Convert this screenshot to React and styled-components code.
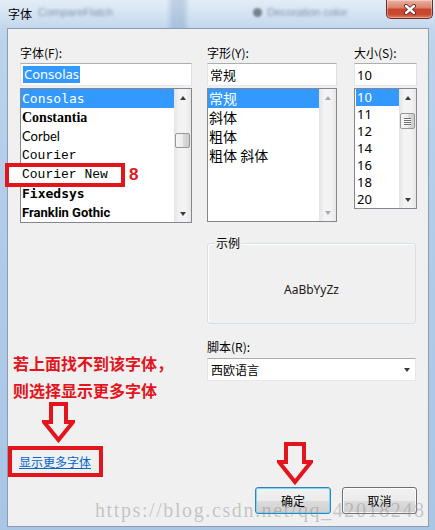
import React from 'react';
import styled, { createGlobalStyle } from 'styled-components';

const RED = '#e3141c';
const CJK = `"Noto Sans CJK SC", "Noto Sans", sans-serif`;

const GlobalStyle = createGlobalStyle`
  html, body {
    margin: 0;
    padding: 0;
    background: #fff;
  }
  body {
    font-family: ${CJK};
    font-size: 12px;
    color: #000;
  }
  * {
    box-sizing: border-box;
  }
`;

const Window = styled.div`
  position: relative;
  width: 435px;
  height: 530px;
  display: flex;
  flex-direction: column;
  overflow: hidden;
  background: linear-gradient(180deg, #cfe0f2 0%, #bcd3eb 8%, #b0cbe8 50%, #a9c6e5 100%);
`;

const TitleBar = styled.div`
  flex: none;
  height: 28px;
  display: flex;
  align-items: flex-start;
  padding: 0 2px 0 8px;
  background:
    linear-gradient(90deg, transparent 166px, rgba(70, 110, 160, 0.22) 173px, rgba(70, 110, 160, 0.22) 183px, transparent 190px),
    linear-gradient(180deg, rgba(255, 255, 255, 0.4), rgba(255, 255, 255, 0));
`;

const Title = styled.span`
  line-height: 28px;
  font-size: 12px;
  color: #000;
`;

const Blurred = styled.span`
  margin-left: ${(p) => p.$gap}px;
  line-height: 24px;
  font-family: "Liberation Sans", sans-serif;
  font-size: 11px;
  color: rgba(50, 70, 95, 0.5);
  filter: blur(1.4px);
  white-space: nowrap;
`;

const BlurDot = styled.span`
  margin: 8px 0 0 ${(p) => p.$gap}px;
  width: 9px;
  height: 9px;
  border-radius: 50%;
  background: rgba(40, 50, 60, 0.55);
  filter: blur(1px);
`;

const CloseButton = styled.div`
  margin-left: auto;
  width: 47px;
  height: 19px;
  display: flex;
  align-items: center;
  justify-content: center;
  border: 1px solid #6e2b22;
  border-top: none;
  border-radius: 0 0 5px 5px;
  background: linear-gradient(180deg, #eab3a3 0%, #dc7f68 45%, #c8452d 50%, #c94a31 80%, #e07b5c 100%);
  box-shadow: inset 0 0 0 1px rgba(255, 255, 255, 0.35);
`;

const Client = styled.div`
  margin: 0 6px 0 7px;
  height: 499px;
  border: 1px solid #8a9db5;
  background: #f0f0f0;
  display: flex;
  flex-direction: column;
`;

const TopRow = styled.div`
  display: flex;
  align-items: flex-start;
  padding: 16px 0 0 12px;
`;

const Column = styled.div`
  width: ${(p) => p.$width}px;
  margin-right: ${(p) => p.$gap || 0}px;
  display: flex;
  flex-direction: column;
`;

const Label = styled.div`
  height: 16px;
  line-height: 16px;
  font-size: 12px;
  margin-bottom: 2px;
  white-space: nowrap;
`;

const TextBox = styled.div`
  height: 23px;
  display: flex;
  align-items: center;
  padding-left: 2px;
  border: 1px solid;
  border-color: #abadb3 #dbdfe6 #e3e9ef #e2e3ea;
  background: #fff;
  font-family: ${(p) => p.$family || CJK};
  font-size: 13px;
`;

const Selection = styled.span`
  background: #3399ff;
  color: #fff;
  line-height: 17px;
  padding: 0 1px;
`;

const ListBox = styled.div`
  margin-top: 2px;
  height: ${(p) => p.$height}px;
  display: flex;
  border: 1px solid #828790;
  background: #fff;
`;

const Items = styled.div`
  flex: 1;
  display: flex;
  flex-direction: column;
`;

const Item = styled.div`
  position: relative;
  height: ${(p) => p.$row}px;
  line-height: ${(p) => p.$row}px;
  padding-left: 1px;
  margin-left: ${(p) => p.$inset || 0}px;
  font-family: ${(p) => p.$family || CJK};
  font-size: ${(p) => p.$size || 13}px;
  font-weight: ${(p) => p.$weight || 400};
  white-space: nowrap;
  background: ${(p) => (p.$selected ? '#3399ff' : 'transparent')};
  color: ${(p) => (p.$selected ? '#fff' : '#000')};
`;

const ItemText = styled.span`
  position: relative;
  z-index: 1;
`;

const Callout = styled.span`
  position: absolute;
  left: -16px;
  top: -2px;
  width: 120px;
  height: 24px;
  border: 4px solid ${RED};
  background: #fff;
  z-index: 0;
`;

const CalloutNumber = styled.span`
  position: absolute;
  left: 108px;
  top: 0;
  font-family: "Liberation Sans", sans-serif;
  font-weight: 700;
  font-size: 17px;
  color: ${RED};
  z-index: 1;
`;

const ScrollBar = styled.div`
  width: 17px;
  display: flex;
  flex-direction: column;
  background: linear-gradient(90deg, #e4e4e4 0%, #f3f3f3 30%, #f3f3f3 70%, #e6e6e6 100%);
`;

const ArrowCell = styled.div`
  height: 17px;
  display: flex;
  align-items: center;
  justify-content: center;
`;

const Triangle = styled.span`
  width: 0;
  height: 0;
  border-left: 3.5px solid transparent;
  border-right: 3.5px solid transparent;
  ${(p) => (p.$down ? 'border-top' : 'border-bottom')}: 4px solid ${(p) => (p.$disabled ? '#a9a9a9' : '#3c3c3c')};
`;

const Track = styled.div`
  flex: 1;
`;

const Thumb = styled.div`
  margin: ${(p) => p.$top}px 1px 0;
  height: ${(p) => p.$height}px;
  border: 1px solid #979797;
  border-radius: 2px;
  background: linear-gradient(90deg, #f5f5f5 0%, #ececec 50%, #dcdcdc 51%, #cdcdcd 100%);
  display: flex;
  flex-direction: column;
  align-items: center;
  justify-content: center;
  gap: 1px;
`;

const Grip = styled.span`
  width: 7px;
  height: 1px;
  background: #6d6d6d;
  box-shadow: 0 1px 0 #fafafa;
`;

const LowerSection = styled.div`
  display: flex;
  align-items: flex-start;
`;

const LeftPane = styled.div`
  width: 199px;
  display: flex;
  flex-direction: column;
  align-items: flex-start;
`;

const Annotation = styled.div`
  margin: 127px 0 0 5px;
  font-family: ${CJK};
  font-size: 16px;
  font-weight: 700;
  line-height: 27px;
  color: ${RED};
  white-space: nowrap;
`;

const ArrowMark = styled.svg`
  display: block;
  flex: none;
  margin: ${(p) => p.$margin};
`;

const LinkBox = styled.div`
  margin-top: 3px;
  width: 95px;
  height: 31px;
  display: flex;
  align-items: center;
  padding-left: 7px;
  border: 4px solid ${RED};
`;

const MoreLink = styled.a`
  font-size: 12px;
  color: #0066cc;
  text-decoration: underline;
  line-height: 16px;
`;

const RightPane = styled.div`
  width: 210px;
  padding-top: 20px;
  display: flex;
  flex-direction: column;
`;

const GroupBox = styled.div`
  position: relative;
  width: 209px;
  height: 81px;
  padding-top: 12px;
  display: flex;
  align-items: center;
  justify-content: center;
  border: 1px solid #d5dfe5;
  border-radius: 3px;
  box-shadow: inset 1px 1px 0 #fff;
`;

const Legend = styled.span`
  position: absolute;
  left: 7px;
  top: -9px;
  padding: 0 1px;
  line-height: 16px;
  font-size: 12px;
  background: #f0f0f0;
`;

const SampleText = styled.span`
  font-family: "Noto Sans", sans-serif;
  font-size: 12px;
  color: #1a1a1a;
`;

const ScriptLabel = styled(Label)`
  margin: 15px 0 0;
`;

const Select = styled.div`
  margin-top: 3px;
  width: 209px;
  height: 23px;
  display: flex;
  align-items: center;
  justify-content: space-between;
  padding: 0 5px 0 3px;
  border: 1px solid;
  border-color: #abadb3 #e3e9ef #e3e9ef #e2e3ea;
  background: #fff;
  font-size: 12px;
`;

const ButtonRow = styled.div`
  margin-top: 61px;
  display: flex;
  justify-content: flex-end;
  align-items: flex-end;
  gap: 11px;
`;

const ButtonStack = styled.div`
  display: flex;
  flex-direction: column;
  align-items: center;
  gap: 2px;
`;

const Button = styled.div`
  width: ${(p) => p.$width}px;
  height: 27px;
  display: flex;
  align-items: center;
  justify-content: center;
  font-size: 12px;
  border-radius: 3px;
  border: 1px solid ${(p) => (p.$default ? '#3c7fb1' : '#707070')};
  background: linear-gradient(180deg, #f2f2f2 0%, #ebebeb 50%, #dddddd 51%, #cfcfcf 100%);
  box-shadow: inset 0 0 0 1px ${(p) => (p.$default ? '#74d9fb' : 'rgba(255,255,255,0.8)')};
`;

const Watermark = styled.div`
  position: absolute;
  left: 95px;
  top: 497px;
  font-family: "Liberation Serif", serif;
  font-size: 20px;
  line-height: 26px;
  letter-spacing: 1.6px;
  color: rgba(140, 140, 140, 0.45);
  white-space: nowrap;
  pointer-events: none;
`;

const fontRows = [
  { name: 'Consolas', family: '"DejaVu Sans Mono", monospace', size: 13, selected: true },
  { name: 'Constantia', family: '"Liberation Serif", serif', size: 14, weight: 700 },
  { name: 'Corbel', family: 'Lato, sans-serif', size: 13 },
  { name: 'Courier', family: '"Liberation Mono", monospace', size: 13 },
  { name: 'Courier New', family: '"Liberation Mono", monospace', size: 13, callout: '8' },
  { name: 'Fixedsys', family: '"DejaVu Sans Mono", monospace', size: 13, weight: 700 },
  { name: 'Franklin Gothic', family: 'Roboto, sans-serif', size: 13, weight: 700 },
];

const styleRows = ['常规', '斜体', '粗体', '粗体 斜体'];
const sizeRows = ['10', '11', '12', '14', '16', '18', '20'];

const Scroll = ({ thumb, grip, disabled }) => (
  <ScrollBar>
    <ArrowCell>
      <Triangle $disabled={disabled} />
    </ArrowCell>
    <Track>
      {thumb && (
        <Thumb $top={thumb.top} $height={thumb.height}>
          {grip && [0, 1, 2, 3].map((i) => <Grip key={i} />)}
        </Thumb>
      )}
    </Track>
    <ArrowCell>
      <Triangle $down $disabled={disabled} />
    </ArrowCell>
  </ScrollBar>
);

const DownArrow = ({ width, height, margin }) => {
  const mid = width / 2;
  const points = [
    [9, 2], [width - 9, 2], [width - 9, 20], [width - 2, 20],
    [mid, height - 3], [2, 20], [9, 20],
  ].map((p) => p.join(',')).join(' ');
  return (
    <ArrowMark width={width} height={height} viewBox={`0 0 ${width} ${height}`} $margin={margin}>
      <polygon points={points} fill="none" stroke={RED} strokeWidth="4" strokeLinejoin="miter" />
    </ArrowMark>
  );
};

export default function App() {
  return (
    <>
      <GlobalStyle />
      <Window>
        <TitleBar>
          <Title>字体</Title>
          <Blurred $gap={6}>CompareFlatch</Blurred>
          <BlurDot $gap={140} />
          <Blurred $gap={5}>Decoration color</Blurred>
          <CloseButton>
            <svg width="14" height="11" viewBox="0 0 14 11">
              <path d="M3 2 L11 9 M11 2 L3 9" stroke="#5b2118" strokeWidth="4" strokeLinecap="round" />
              <path d="M3 2 L11 9 M11 2 L3 9" stroke="#fff" strokeWidth="2.4" strokeLinecap="round" />
            </svg>
          </CloseButton>
        </TitleBar>

        <Client>
          <TopRow>
            <Column $width={172} $gap={15}>
              <Label>字体(F):</Label>
              <TextBox $family={`"Noto Sans", sans-serif`}>
                <Selection>Consolas</Selection>
              </TextBox>
              <ListBox $height={135}>
                <Items>
                  {fontRows.map((f) => (
                    <Item
                      key={f.name}
                      $row={19}
                      $family={f.family}
                      $size={f.size}
                      $weight={f.weight}
                      $selected={f.selected}
                    >
                      {f.callout && <Callout />}
                      <ItemText>{f.name}</ItemText>
                      {f.callout && <CalloutNumber>{f.callout}</CalloutNumber>}
                    </Item>
                  ))}
                </Items>
                <Scroll thumb={{ top: 27, height: 15 }} />
              </ListBox>
            </Column>

            <Column $width={130} $gap={17}>
              <Label>字形(Y):</Label>
              <TextBox>常规</TextBox>
              <ListBox $height={134}>
                <Items>
                  {styleRows.map((s, i) => (
                    <Item key={s} $row={19} $size={14} $selected={i === 0}>
                      {s}
                    </Item>
                  ))}
                </Items>
                <Scroll disabled />
              </ListBox>
            </Column>

            <Column $width={63}>
              <Label>大小(S):</Label>
              <TextBox $family={`"Noto Sans", sans-serif`}>10</TextBox>
              <ListBox $height={121}>
                <Items>
                  {sizeRows.map((s, i) => (
                    <Item
                      key={s}
                      $row={17}
                      $inset={1}
                      $family={`"Noto Sans", sans-serif`}
                      $selected={i === 0}
                    >
                      {s}
                    </Item>
                  ))}
                </Items>
                <Scroll thumb={{ top: 7, height: 16 }} grip />
              </ListBox>
            </Column>
          </TopRow>

          <LowerSection>
            <LeftPane>
              <Annotation>
                若上面找不到该字体，
                <br />
                则选择显示更多字体
              </Annotation>
              <DownArrow width={33} height={41} margin="-2px 0 0 34px" />
              <LinkBox>
                <MoreLink href="#">显示更多字体</MoreLink>
              </LinkBox>
            </LeftPane>

            <RightPane>
              <GroupBox>
                <Legend>示例</Legend>
                <SampleText>AaBbYyZz</SampleText>
              </GroupBox>
              <ScriptLabel>脚本(R):</ScriptLabel>
              <Select>
                <span>西欧语言</span>
                <Triangle $down />
              </Select>
              <ButtonRow>
                <ButtonStack>
                  <DownArrow width={36} height={43} margin="0 0 0 4px" />
                  <Button $width={76} $default>确定</Button>
                </ButtonStack>
                <Button $width={75}>取消</Button>
              </ButtonRow>
            </RightPane>
          </LowerSection>
        </Client>

        <Watermark>https://blog.csdn.net/qq_42018248</Watermark>
      </Window>
    </>
  );
}
